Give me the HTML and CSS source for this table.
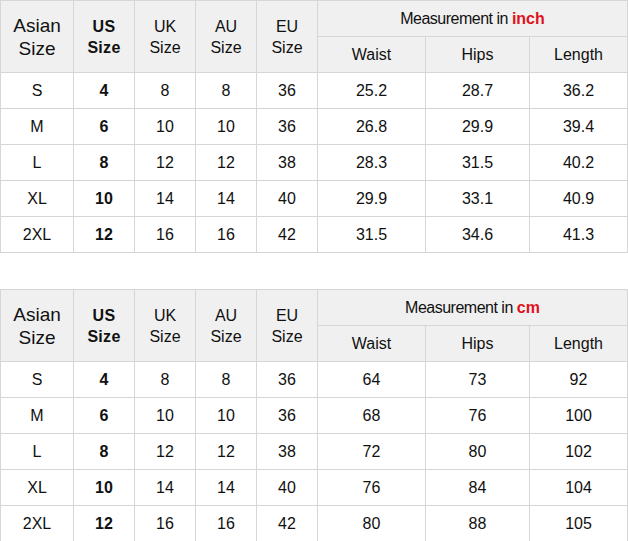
FILE: index.html
```html
<!DOCTYPE html>
<html>
<head>
<meta charset="utf-8">
<link rel="stylesheet" href="styles.css">
</head>
<body>
<div class="page">
<table class="size-table">
  <colgroup>
    <col class="c-asian"><col class="c-sm"><col class="c-sm"><col class="c-sm"><col class="c-sm"><col class="c-waist"><col class="c-hips"><col class="c-len">
  </colgroup>
  <thead>
    <tr>
      <th rowspan="2" class="asian">Asian<br>Size</th>
      <th rowspan="2" class="us">US<br>Size</th>
      <th rowspan="2" class="sz">UK<br>Size</th>
      <th rowspan="2" class="sz">AU<br>Size</th>
      <th rowspan="2" class="sz">EU<br>Size</th>
      <th colspan="3" class="meas">Measurement in <span class="unit">inch</span></th>
    </tr>
    <tr><th class="sub">Waist</th><th class="sub">Hips</th><th class="sub">Length</th></tr>
  </thead>
  <tbody>
    <tr><td>S</td><td class="b">4</td><td>8</td><td>8</td><td>36</td><td>25.2</td><td>28.7</td><td>36.2</td></tr>
    <tr><td>M</td><td class="b">6</td><td>10</td><td>10</td><td>36</td><td>26.8</td><td>29.9</td><td>39.4</td></tr>
    <tr><td>L</td><td class="b">8</td><td>12</td><td>12</td><td>38</td><td>28.3</td><td>31.5</td><td>40.2</td></tr>
    <tr><td>XL</td><td class="b">10</td><td>14</td><td>14</td><td>40</td><td>29.9</td><td>33.1</td><td>40.9</td></tr>
    <tr><td>2XL</td><td class="b">12</td><td>16</td><td>16</td><td>42</td><td>31.5</td><td>34.6</td><td>41.3</td></tr>
  </tbody>
</table>
<table class="size-table">
  <colgroup>
    <col class="c-asian"><col class="c-sm"><col class="c-sm"><col class="c-sm"><col class="c-sm"><col class="c-waist"><col class="c-hips"><col class="c-len">
  </colgroup>
  <thead>
    <tr>
      <th rowspan="2" class="asian">Asian<br>Size</th>
      <th rowspan="2" class="us">US<br>Size</th>
      <th rowspan="2" class="sz">UK<br>Size</th>
      <th rowspan="2" class="sz">AU<br>Size</th>
      <th rowspan="2" class="sz">EU<br>Size</th>
      <th colspan="3" class="meas">Measurement in <span class="unit">cm</span></th>
    </tr>
    <tr><th class="sub">Waist</th><th class="sub">Hips</th><th class="sub">Length</th></tr>
  </thead>
  <tbody>
    <tr><td>S</td><td class="b">4</td><td>8</td><td>8</td><td>36</td><td>64</td><td>73</td><td>92</td></tr>
    <tr><td>M</td><td class="b">6</td><td>10</td><td>10</td><td>36</td><td>68</td><td>76</td><td>100</td></tr>
    <tr><td>L</td><td class="b">8</td><td>12</td><td>12</td><td>38</td><td>72</td><td>80</td><td>102</td></tr>
    <tr><td>XL</td><td class="b">10</td><td>14</td><td>14</td><td>40</td><td>76</td><td>84</td><td>104</td></tr>
    <tr><td>2XL</td><td class="b">12</td><td>16</td><td>16</td><td>42</td><td>80</td><td>88</td><td>105</td></tr>
  </tbody>
</table>
</div>
</body>
</html>
```

FILE: styles.css
```css
html, body {
  margin: 0;
  padding: 0;
  background: #ffffff;
}
.page {
  display: flex;
  flex-direction: column;
  gap: 36px;
  font-family: "Liberation Sans", Arial, sans-serif;
  color: #111111;
}
.size-table {
  width: 628px;
  table-layout: fixed;
  border-collapse: separate;
  border-spacing: 0;
  border-top: 1px solid #d6d6d6;
  border-left: 1px solid #d6d6d6;
}
.c-asian { width: 73px; }
.c-sm { width: 61px; }
.c-waist { width: 108px; }
.c-hips { width: 104px; }
.c-len { width: 98px; }
.size-table th,
.size-table td {
  border-right: 1px solid #d6d6d6;
  border-bottom: 1px solid #d6d6d6;
  padding: 0;
  text-align: center;
  vertical-align: middle;
  height: 35px;
  font-size: 16px;
  font-weight: normal;
  line-height: 19px;
}
.size-table th {
  background: #f0f0f0;
}
.size-table td.b {
  font-weight: bold;
}
.size-table th.asian {
  font-size: 19px;
  line-height: 23px;
}
.size-table th.us {
  font-weight: bold;
  font-size: 16px;
  line-height: 21px;
  letter-spacing: 0.3px;
}
.size-table th.sz {
  line-height: 21px;
}
.size-table th.meas {
  font-size: 16px;
  letter-spacing: -0.5px;
}
.unit {
  color: #e0111b;
  font-weight: bold;
  letter-spacing: 0;
}
```
